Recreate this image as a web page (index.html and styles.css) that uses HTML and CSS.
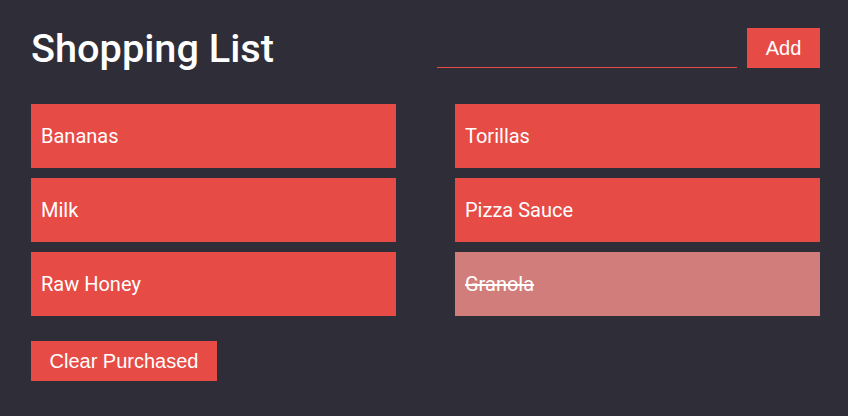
FILE: index.html
```html
<!DOCTYPE html>
<html lang="en">
<head>
<meta charset="utf-8">
<title>Shopping List</title>
<link rel="stylesheet" href="styles.css">
</head>
<body>
<main class="app">
  <header class="header">
    <h1 class="title">Shopping List</h1>
    <form class="add-form">
      <input class="add-input" type="text" aria-label="New item">
      <button class="btn btn-add" type="button">Add</button>
    </form>
  </header>
  <ul class="items">
    <li class="item">Bananas</li>
    <li class="item">Milk</li>
    <li class="item">Raw Honey</li>
    <li class="item">Torillas</li>
    <li class="item">Pizza Sauce</li>
    <li class="item item-done">Granola</li>
  </ul>
  <button class="btn btn-clear" type="button">Clear Purchased</button>
</main>
</body>
</html>
```
FILE: styles.css
```css
html, body {
  margin: 0;
  padding: 0;
  background: #2e2d38;
  height: 100%;
}
.app {
  padding: 28px 28px 0 31px;
  font-family: Roboto, "Liberation Sans", sans-serif;
  color: #fff;
}
.header {
  display: flex;
  align-items: center;
  justify-content: space-between;
  height: 40px;
}
.title {
  margin: 0;
  padding-top: 2px;
  font-size: 39.7px;
  font-weight: 500;
  line-height: 42px;
  color: #fff;
}
.add-form {
  display: flex;
  align-items: stretch;
  gap: 10px;
  height: 40px;
}
.add-input {
  width: 300px;
  box-sizing: border-box;
  background: transparent;
  border: none;
  border-bottom: 1px solid #e64b45;
  color: #fff;
  font-family: Roboto, sans-serif;
  font-size: 18px;
  outline: none;
  padding: 0;
  margin: 0;
}
.btn {
  background: #e64b45;
  color: #fff;
  border: none;
  border-radius: 0;
  font-family: "Liberation Sans", Arial, sans-serif;
  font-size: 20px;
  height: 40px;
  padding: 0;
  margin: 0;
}
.btn-add {
  width: 73px;
}
.items {
  list-style: none;
  margin: 36px 0 25px;
  padding: 0;
  display: grid;
  grid-template-columns: 365px 365px;
  grid-template-rows: repeat(3, 64px);
  grid-auto-flow: column;
  column-gap: 59px;
  row-gap: 10px;
}
.item {
  background: #e64b45;
  color: #fff;
  font-size: 20px;
  line-height: 64px;
  padding-left: 10px;
}
.item-done {
  background: #d17d7b;
  text-decoration: line-through;
}
.btn-clear {
  width: 186px;
}
```
